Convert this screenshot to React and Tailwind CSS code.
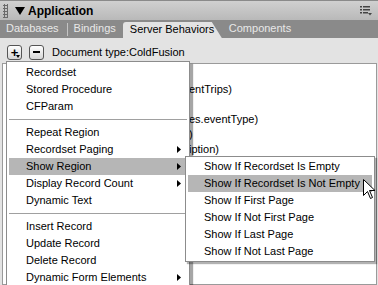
import React from "react";

const mainItems = [
  { label: "Recordset" },
  { label: "Stored Procedure" },
  { label: "CFParam" },
  { sep: true },
  { label: "Repeat Region" },
  { label: "Recordset Paging", sub: true },
  { label: "Show Region", sub: true, active: true },
  { label: "Display Record Count", sub: true },
  { label: "Dynamic Text" },
  { sep: true },
  { label: "Insert Record" },
  { label: "Update Record" },
  { label: "Delete Record" },
  { label: "Dynamic Form Elements", sub: true },
];

const subItems = [
  "Show If Recordset Is Empty",
  "Show If Recordset Is Not Empty",
  "Show If First Page",
  "Show If Not First Page",
  "Show If Last Page",
  "Show If Not Last Page",
];

const panelLines = ["", "entTrips)", "", "es.eventType)", ")", "iption)"];

function Arrow() {
  return (
    <svg width="4" height="7" viewBox="0 0 4 7" className="absolute right-[6px] top-[5px]">
      <path d="M0 0 L4 3.5 L0 7 Z" fill="#000" />
    </svg>
  );
}

function MenuRow({ item }) {
  if (item.sep) {
    return <div className="h-[9px] flex items-center px-[2px]"><div className="h-px w-full bg-[#a0a0a0]" /></div>;
  }
  return (
    <div className={`relative h-[17px] leading-[17px] pl-[17px] mx-[2px] whitespace-nowrap ${item.active ? "bg-[#b6b6b6]" : ""}`}>
      {item.label}
      {item.sub && <Arrow />}
    </div>
  );
}

export default function App() {
  return (
    <div className="relative w-[378px] h-[285px] overflow-hidden flex flex-col bg-[#e3e3e3] text-[11px] text-black font-['Liberation_Sans',Arial,sans-serif]">
      {/* panel title */}
      <div className="h-[20px] flex items-center border-t border-[#8a8a8a] bg-gradient-to-b from-[#d0d0d0] to-[#b9b9b9]">
        <div className="ml-[3px] w-[5px] h-[14px] bg-[radial-gradient(#6a6a6a_1px,transparent_1.2px)] bg-[length:3px_3px]" />
        <svg width="10" height="8" viewBox="0 0 10 8" className="ml-[7px]">
          <path d="M0 0 H10 L5 8 Z" fill="#000" />
        </svg>
        <span className="ml-[3px] font-bold text-[12px]">Application</span>
        <svg width="12" height="10" viewBox="0 0 12 10" className="ml-auto mr-[6px]">
          <rect x="0" y="0" width="2" height="1.5" fill="#444" />
          <rect x="3" y="0" width="7" height="1.5" fill="#444" />
          <rect x="0" y="3" width="2" height="1.5" fill="#444" />
          <rect x="3" y="3" width="7" height="1.5" fill="#444" />
          <rect x="0" y="6" width="2" height="1.5" fill="#444" />
          <rect x="3" y="6" width="5" height="1.5" fill="#444" />
          <path d="M8 7 H12 L10 9.5 Z" fill="#444" />
        </svg>
      </div>

      {/* tabs */}
      <div className="h-[18px] flex items-end bg-[#8a8a8a] text-[#e8e8e8]">
        <div className="h-[18px] leading-[17px] pl-[6px] pr-[8px]">Databases</div>
        <div className="w-px h-[13px] mb-[2px] bg-[#c4c4c4]" />
        <div className="h-[18px] leading-[17px] pl-[6px] pr-[7px]">Bindings</div>
        <div className="h-[16px] w-[99px] leading-[15px] pl-[7px] text-black bg-[#e3e3e3] rounded-tl-[3px] [clip-path:polygon(0_0,89px_0,100%_100%,0_100%)]">
          Server Behaviors
        </div>
        <div className="h-[18px] leading-[17px] pl-[7px]">Components</div>
      </div>

      {/* toolbar */}
      <div className="h-[25px] flex items-center pl-[7px] pt-[3px]">
        <div className="relative w-[15px] h-[15px] rounded-[3px] border border-[#555] bg-gradient-to-b from-white to-[#d6d6d6] flex items-center justify-center font-bold text-[13px] leading-none">
          +
          <svg width="4" height="3" viewBox="0 0 4 3" className="absolute right-[1px] bottom-[1px]">
            <path d="M0 0 H4 L2 3 Z" fill="#000" />
          </svg>
        </div>
        <div className="ml-[7px] w-[15px] h-[15px] rounded-[3px] border border-[#555] bg-gradient-to-b from-white to-[#d6d6d6] flex items-center justify-center">
          <div className="w-[7px] h-[2px] bg-black" />
        </div>
        <span className="ml-[8px]">Document type:ColdFusion</span>
      </div>

      {/* server behaviors list */}
      <div className="flex-1 ml-[2px] mr-[1px] bg-white border border-[#9a9a9a] pt-[3px] pl-[186px] whitespace-nowrap">
        {panelLines.map((t, i) => (
          <div key={i} className="h-[15px] leading-[15px]">{t}</div>
        ))}
      </div>

      {/* popup menu */}
      <div className="absolute left-[6px] top-[61px] w-[184px] bg-white border border-[#8c8c8c] pt-[2px] shadow-[3px_3px_1px_rgba(0,0,0,0.35)]">
        {mainItems.map((item, i) => (
          <MenuRow key={i} item={item} />
        ))}
      </div>

      {/* submenu */}
      <div className="absolute left-[185px] top-[156px] w-[190px] bg-white border border-[#8c8c8c] py-[1px] shadow-[2px_2px_1px_rgba(0,0,0,0.3)]">
        {subItems.map((s, i) => (
          <div key={s} className={`h-[17px] leading-[17px] pl-[16px] mx-[2px] whitespace-nowrap ${i === 1 ? "bg-[#b6b6b6]" : ""}`}>
            {s}
          </div>
        ))}
      </div>

      {/* mouse cursor */}
      <svg width="13" height="21" viewBox="0 0 13 21" className="absolute left-[363px] top-[179px]">
        <path d="M0.5 0.5 V16.5 L4.5 12.5 L7.5 19.5 L9.5 18.5 L6.5 11.5 L12 11.5 Z" fill="#fff" stroke="#000" strokeWidth="1" strokeLinejoin="miter" />
      </svg>
    </div>
  );
}
